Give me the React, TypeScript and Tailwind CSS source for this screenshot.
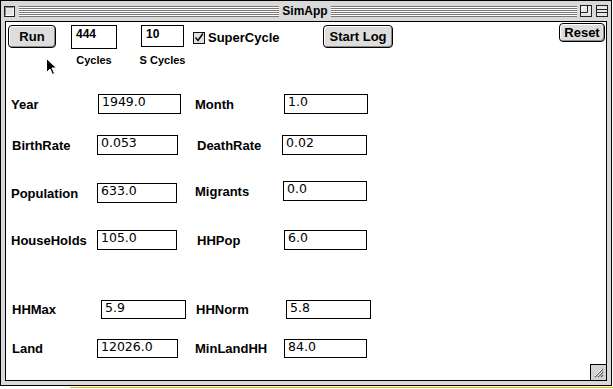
const label = "whitespace-nowrap font-['Liberation_Sans',Arial,sans-serif] text-[13px] font-bold leading-[15px] text-black";
const field =
  "flex h-full items-start border border-black bg-white pl-[3px] font-['DejaVu_Sans',Verdana,sans-serif] text-[12.5px] leading-[14px] text-black";
const stripes =
  "h-[11px] bg-[repeating-linear-gradient(to_bottom,#777777_0px,#777777_1px,#ffffff_1px,#ffffff_2px)]";

function Button({ text, className }: { text: string; className: string }) {
  return (
    <div
      className={`flex items-center justify-center rounded-[4px] border border-black bg-[#dddddd] font-['Liberation_Sans',Arial,sans-serif] text-[13px] font-bold leading-none text-black shadow-[inset_1px_1px_0_#ffffff,inset_-1px_-1px_0_#8a8a8a] ${className}`}
    >
      {text}
    </div>
  );
}

function CloseBox() {
  return (
    <svg width="11" height="11" viewBox="0 0 11 11" className="ml-[3px] shrink-0">
      <rect x="0.5" y="0.5" width="10" height="10" fill="#bbbbbb" stroke="#222" />
      <rect x="1.5" y="1.5" width="8" height="8" fill="#e4e4e4" stroke="none" />
      <path d="M2 9.5 H9.5 V2" stroke="#ffffff" fill="none" />
      <path d="M1.5 9 V1.5 H9" stroke="#888888" fill="none" />
    </svg>
  );
}

function ZoomBox() {
  return (
    <svg width="12" height="12" viewBox="0 0 12 12" className="ml-[3px] shrink-0">
      <rect x="0.5" y="0.5" width="11" height="11" fill="#e6e6e6" stroke="#222" />
      <path d="M1 7.5 H7.5 V1" stroke="#222" fill="none" />
      <path d="M2 6.5 V2 H6.5" stroke="#ffffff" fill="none" />
    </svg>
  );
}

function ShadeBox() {
  return (
    <svg width="12" height="12" viewBox="0 0 12 12" className="ml-[4px] mr-[3px] shrink-0">
      <rect x="0.5" y="0.5" width="11" height="11" fill="#e6e6e6" stroke="#222" />
      <path d="M1 4.5 H11 M1 7.5 H11" stroke="#222" fill="none" />
    </svg>
  );
}

function CheckBox() {
  return (
    <svg width="12" height="12" viewBox="0 0 12 12" className="shrink-0">
      <rect x="0.5" y="0.5" width="11" height="11" fill="#e2e2e2" stroke="#111" />
      <path d="M2.5 5.5 L5 8.5 L10 1.5" stroke="#111" strokeWidth="1.6" fill="none" />
    </svg>
  );
}

function Cursor() {
  return (
    <svg width="12" height="18" viewBox="0 0 12 18" className="absolute left-[40px] top-[36px]">
      <path d="M0.5 0.5 V14.5 L4 11 L6.5 16.5 L8.5 15.5 L6 10 H10.5 Z" fill="#000" stroke="#fff" strokeWidth="1" />
    </svg>
  );
}

function GrowBox() {
  return (
    <div className="absolute bottom-0 right-0 h-[16px] w-[16px] border-l border-t border-black bg-[#d4d4d4]">
      <svg width="15" height="15" viewBox="0 0 15 15">
        <path d="M4 12 L12 4 M7 12 L12 7 M10 12 L12 10" stroke="#666" strokeWidth="1.3" />
        <path d="M4 11 L11 4 M7 11 L11 7" stroke="#fff" strokeWidth="1" />
      </svg>
    </div>
  );
}

export default function App() {
  return (
    <div className="h-[389px] w-[613px] overflow-hidden bg-white">
      <div className="flex h-[386px] w-[612px] flex-col border border-black bg-[#d9d9d9]">
        {/* title bar */}
        <div className="flex h-[20px] shrink-0 items-center">
          <CloseBox />
          <div className={`ml-[4px] w-[260px] ${stripes}`} />
          <span className="w-[52px] text-center font-['Liberation_Sans',Arial,sans-serif] text-[12px] font-bold leading-none text-black">
            SimApp
          </span>
          <div className={`flex-1 ${stripes}`} />
          <ZoomBox />
          <ShadeBox />
        </div>

        {/* content */}
        <div className="relative mx-[4px] mb-[4px] flex flex-1 flex-col border border-black bg-white">
          <div className="relative h-[72px] shrink-0">
            <div className="flex items-start">
              <Button text="Run" className="ml-[2px] mt-[3px] h-[23px] w-[48px]" />
              <div className="ml-[15px] mt-[3px] flex w-[46px] flex-col items-center">
                <div className="h-[24px] w-[46px] border border-black pl-[4px] pt-[2px] font-['Liberation_Sans',Arial,sans-serif] text-[12px] font-bold leading-[13px]">
                  444
                </div>
                <span className="mt-[5px] whitespace-nowrap font-['Liberation_Sans',Arial,sans-serif] text-[11px] font-bold leading-[13px]">
                  Cycles
                </span>
              </div>
              <div className="ml-[24px] mt-[3px] flex w-[43px] flex-col items-center">
                <div className="h-[22px] w-[43px] border border-black pl-[4px] pt-[2px] font-['Liberation_Sans',Arial,sans-serif] text-[12px] font-bold leading-[13px]">
                  10
                </div>
                <span className="mt-[7px] whitespace-nowrap font-['Liberation_Sans',Arial,sans-serif] text-[11px] font-bold leading-[13px]">
                  S Cycles
                </span>
              </div>
              <div className="ml-[9px] mt-[8px] flex w-[130px] items-center gap-[3px]">
                <CheckBox />
                <span className={label}>SuperCycle</span>
              </div>
              <Button text="Start Log" className="mt-[3px] h-[23px] w-[70px]" />
              <div className="flex-1" />
              <Button text="Reset" className="mr-[1px] mt-[1px] h-[19px] w-[46px]" />
            </div>
            <Cursor />
          </div>

          {/* Year / Month */}
          <div className="flex h-[20px] items-center pl-[5px]">
            <span className={`w-[87px] ${label}`}>Year</span>
            <div className={`w-[83px] ${field}`}>1949.0</div>
            <span className={`ml-[14px] w-[89px] ${label}`}>Month</span>
            <div className={`w-[84px] ${field}`}>1.0</div>
          </div>

          {/* BirthRate / DeathRate */}
          <div className="mt-[21px] flex h-[20px] items-center pl-[6px]">
            <span className={`w-[85px] ${label}`}>BirthRate</span>
            <div className={`w-[81px] ${field}`}>0.053</div>
            <span className={`ml-[19px] w-[85px] ${label}`}>DeathRate</span>
            <div className={`w-[85px] ${field}`}>0.02</div>
          </div>

          {/* Population / Migrants */}
          <div className="mt-[28px] flex h-[20px] items-center pl-[5px]">
            <span className={`w-[86px] ${label}`}>Population</span>
            <div className={`w-[80px] ${field}`}>633.0</div>
            <span className={`mb-[4px] ml-[18px] w-[88px] ${label}`}>Migrants</span>
            <div className={`-mt-[4px] w-[84px] ${field}`}>0.0</div>
          </div>

          {/* HouseHolds / HHPop */}
          <div className="mt-[27px] flex h-[20px] items-center pl-[5px]">
            <span className={`w-[86px] ${label}`}>HouseHolds</span>
            <div className={`w-[80px] ${field}`}>105.0</div>
            <span className={`ml-[20px] w-[87px] ${label}`}>HHPop</span>
            <div className={`w-[83px] ${field}`}>6.0</div>
          </div>

          {/* HHMax / HHNorm */}
          <div className="mt-[50px] flex h-[19px] items-center pl-[6px]">
            <span className={`w-[89px] ${label}`}>HHMax</span>
            <div className={`w-[85px] ${field}`}>5.9</div>
            <span className={`ml-[10px] w-[90px] ${label}`}>HHNorm</span>
            <div className={`w-[85px] ${field}`}>5.8</div>
          </div>

          {/* Land / MinLandHH */}
          <div className="mt-[20px] flex h-[19px] items-center pl-[6px]">
            <span className={`w-[85px] ${label}`}>Land</span>
            <div className={`w-[81px] ${field}`}>12026.0</div>
            <span className={`ml-[17px] w-[89px] ${label}`}>MinLandHH</span>
            <div className={`w-[83px] ${field}`}>84.0</div>
          </div>

          <GrowBox />
        </div>
      </div>
      <div className="ml-[70px] mt-[1px] h-[1px] bg-[#e8b800]" />
    </div>
  );
}
